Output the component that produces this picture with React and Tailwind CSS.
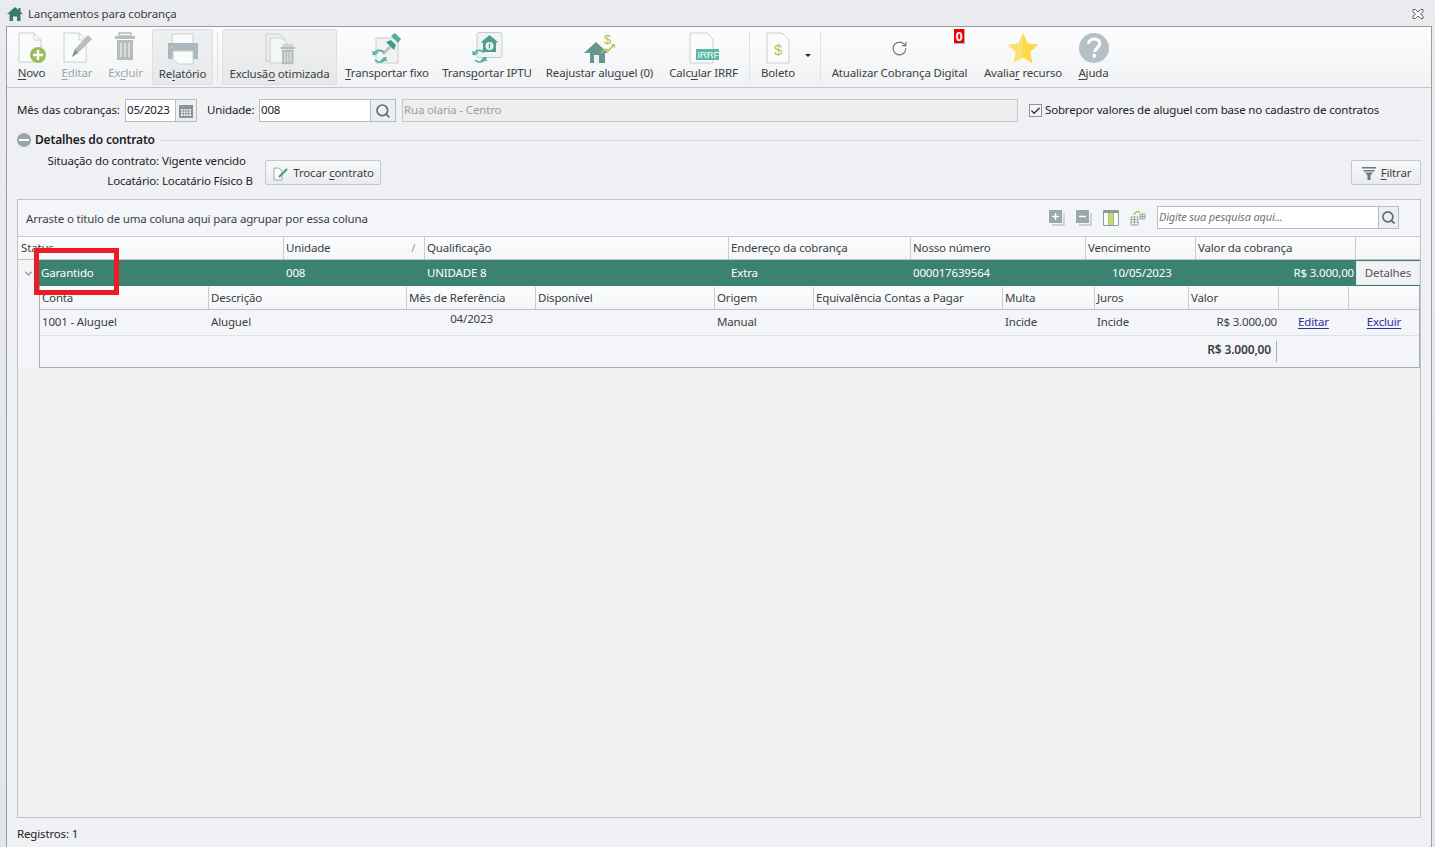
import { Search, ChevronDown, RotateCcw, Check } from "lucide-react";

function Doc() {
  return (
    <path
      d="M3 1h15l7 7v22H3z M18 1v7h7"
      fill="#fafbfb"
      stroke="#c9d0d3"
      strokeWidth="1"
    />
  );
}

function IconNovo() {
  return (
    <svg width="32" height="32" viewBox="0 0 32 32">
      <Doc />
      <circle cx="22" cy="23" r="8" fill="#9dbb5c" />
      <path d="M22 18v10M17 23h10" stroke="#fff" strokeWidth="2.4" />
    </svg>
  );
}

function IconEditar() {
  return (
    <svg width="32" height="32" viewBox="0 0 32 32">
      <Doc />
      <path d="M11 25l3-8L27 3l4 4-14 14z" fill="#b9bdbe" />
      <path d="M11 25l3-8 3 4z" fill="#8e9294" />
    </svg>
  );
}

function Trash({ x = 0, y = 0, s = 1 }) {
  return (
    <g transform={`translate(${x} ${y}) scale(${s})`} fill="#b8bcbd">
      <path d="M9 1h12v3H9z" fill="none" stroke="#b8bcbd" strokeWidth="1.4" />
      <rect x="5" y="4" width="20" height="3" />
      <path d="M7 8h16v20H7z" />
      <path d="M11 11v14M15 11v14M19 11v14" stroke="#e9ebeb" strokeWidth="1.4" />
    </g>
  );
}

function IconExcluir() {
  return (
    <svg width="32" height="32" viewBox="0 0 32 32">
      <Trash />
    </svg>
  );
}

function IconPrinter() {
  return (
    <svg width="32" height="32" viewBox="0 0 32 32">
      <path d="M5 1h21v10H5z" fill="#fafbfb" stroke="#c9d0d3" />
      <path d="M1 10h30v16H1z" fill="#abb9bf" />
      <path d="M6 18h20v13H11l-5-5z" fill="#fafbfb" stroke="#c9d0d3" />
      <circle cx="5" cy="14" r="1" fill="#cfd86a" />
    </svg>
  );
}

function IconExclusao() {
  return (
    <svg width="32" height="32" viewBox="0 0 32 32">
      <path d="M2 1h14l5 5v22H2z" fill="none" stroke="#c9d0d3" />
      <path d="M6 5h12l5 5v20H6z" fill="#f4f5f5" stroke="#c9d0d3" />
      <Trash x={13} y={11} s={0.72} />
    </svg>
  );
}

function Sync({ x = 0, y = 0 }) {
  return (
    <g transform={`translate(${x} ${y})`} fill="none" stroke="#4fae9d" strokeWidth="1.6">
      <path d="M2 7a6.5 6.5 0 0 1 11-2.5" />
      <path d="M15 9a6.5 6.5 0 0 1-11 3" />
      <path d="M1 3.5l3 3 3-2.5" strokeWidth="1.3" />
      <path d="M10 13l3-3 3 3" strokeWidth="1.3" />
    </g>
  );
}

function IconFixo() {
  return (
    <svg width="32" height="32" viewBox="0 0 32 32">
      <path d="M5 6h22v25H5z" fill="#f1f3f3" stroke="#c4cdd0" />
      <path d="M12 22l9-9" stroke="#bfc3c4" strokeWidth="3" />
      <path d="M15 10l8 8 2-5-5-5z" fill="#3f9c8b" />
      <path d="M20 4l4-3 6 6-3 4z" fill="#4fae9d" />
      <Sync x={0} y={16} />
    </svg>
  );
}

function IconIptu() {
  return (
    <svg width="32" height="32" viewBox="0 0 32 32">
      <rect x="6" y="0.5" width="25" height="25" rx="2" fill="#f1f3f3" stroke="#c4cdd0" />
      <path d="M18.5 3l9 7.5h-2.5V20H12v-9.5H9.5z" fill="#4f9d8d" />
      <circle cx="18.5" cy="14" r="4" fill="#f1f3f3" />
      <path d="M18.5 11.5v5" stroke="#4f9d8d" strokeWidth="1.4" />
      <Sync x={0} y={16} />
    </svg>
  );
}

function IconReajuste() {
  return (
    <svg width="32" height="32" viewBox="0 0 32 32">
      <path d="M12 10l12 11h-3v10H6V21H0z" fill="#6a958c" />
      <rect x="10" y="23" width="5" height="8" fill="#eef1f1" />
      <path d="M17 21l5-4 2 2 6-6" fill="none" stroke="#b4c544" strokeWidth="1.6" />
      <path d="M27 12h4v4z" fill="#b4c544" />
      <text x="20" y="12" fontSize="13" fill="#b4c544" fontFamily="Liberation Sans, sans-serif">$</text>
    </svg>
  );
}

function IconIrrf() {
  return (
    <svg width="36" height="32" viewBox="0 0 36 32">
      <path d="M4 1h17l6 6v24H4z" fill="#fafbfb" stroke="#c9d0d3" />
      <rect x="10" y="17" width="23" height="11" fill="#5ab8a6" />
      <text x="11.5" y="26" fontSize="9.5" fill="#fff" fontFamily="Liberation Sans Narrow, Liberation Sans, sans-serif">IRRF</text>
    </svg>
  );
}

function IconBoleto() {
  return (
    <svg width="26" height="32" viewBox="0 0 26 32">
      <path d="M2 1h15l7 7v23H2z" fill="#fafbfb" stroke="#c9d0d3" />
      <text x="9" y="23" fontSize="15" fill="#b4c544" fontFamily="Liberation Sans, sans-serif">$</text>
    </svg>
  );
}

function IconStar() {
  return (
    <svg width="32" height="32" viewBox="0 0 32 32">
      <path d="M16 1l4.6 10.4L31 12.7l-7.8 7.2L25.4 31 16 25.4 6.6 31l2.2-11.1L1 12.7l10.4-1.3z" fill="#fde06a" />
      <path d="M16 1l4.6 10.4L31 12.7l-7.8 7.2L25.4 31 16 25.4z" fill="#fdd84c" />
    </svg>
  );
}

function IconHelp() {
  return (
    <svg width="32" height="32" viewBox="0 0 32 32">
      <circle cx="16" cy="16" r="15" fill="#b4c0c5" />
      <path d="M10.5 12c0-3 2.4-5 5.6-5s5.6 1.9 5.6 4.8c0 4-5 4.2-5 8.2" fill="none" stroke="#fff" strokeWidth="3.2" />
      <rect x="14.7" y="22" width="3.2" height="3.6" fill="#fff" />
    </svg>
  );
}

function ToolLabel({ text, u, muted }) {
  const i = text.indexOf(u);
  return (
    <span className={`whitespace-nowrap ${muted ? "text-[#a0a5a8]" : "text-[#3b3f42]"}`}>
      {text.slice(0, i)}
      <span className="underline underline-offset-2">{u}</span>
      {text.slice(i + u.length)}
    </span>
  );
}

function ToolButton({ icon, text, u, muted, boxed, className = "" }) {
  return (
    <div
      className={`flex flex-col items-center justify-between h-[56px] pb-[5px] pt-[3px] ${
        boxed
          ? "border border-[#dcdfe1] rounded-[2px] bg-gradient-to-b from-[#eef0f1] to-[#e6e8e9] px-[6px]"
          : ""
      } ${className}`}
    >
      <div className="h-[32px] flex items-center justify-center">{icon}</div>
      {u ? <ToolLabel text={text} u={u} muted={muted} /> : <span className="whitespace-nowrap text-[#3b3f42]">{text}</span>}
    </div>
  );
}

function Divider({ className = "" }) {
  return <div className={`w-px h-[50px] bg-[#dfe2e4] ${className}`} />;
}

function Toolbar() {
  return (
    <div className="h-[61px] flex items-center pl-[10px] bg-gradient-to-b from-[#fdfdfe] to-[#f0f2f4] border-b border-[#c3c7ca]">
      <ToolButton icon={<IconNovo />} text="Novo" u="N" className="w-[29px]" />
      <ToolButton icon={<IconEditar />} text="Editar" u="E" muted className="w-[30px] ml-[16px]" />
      <ToolButton icon={<IconExcluir />} text="Excluir" u="c" muted className="w-[35px] ml-[16px]" />
      <ToolButton icon={<IconPrinter />} text="Relatório" u="l" boxed className="w-[61px] ml-[9px]" />
      <Divider className="ml-[4px]" />
      <ToolButton icon={<IconExclusao />} text="Exclusão otimizada" u="o" boxed className="w-[115px] ml-[4px]" />
      <ToolButton icon={<IconFixo />} text="Transportar fixo" u="T" className="w-[82px] ml-[9px]" />
      <ToolButton icon={<IconIptu />} text="Transportar IPTU" u="p" className="w-[86px] ml-[16px]" />
      <ToolButton icon={<IconReajuste />} text="Reajustar aluguel (0)" u="g" className="w-[107px] ml-[16px]" />
      <ToolButton icon={<IconIrrf />} text="Calcular IRRF" u="u" className="w-[69px] ml-[16px]" />
      <Divider className="ml-[11px]" />
      <ToolButton icon={<IconBoleto />} text="Boleto" className="w-[34px] ml-[11px]" />
      <div className="w-0 h-0 ml-[10px] mt-[-3px] border-x-[3px] border-x-transparent border-t-[3px] border-t-[#222]" />
      <Divider className="ml-[9px]" />
      <div className="relative ml-[10px] mt-[3px]">
        <ToolButton
          icon={<RotateCcw size={17} strokeWidth={1.6} color="#777" className="-scale-x-100" />}
          text="Atualizar Cobrança Digital"
          className="w-[137px]"
        />
        <span className="absolute left-[123px] -top-[2px] w-[11px] h-[15px] bg-[#ee0000] border-b border-r border-[#b0b4b6] text-white text-[12px] leading-[15px] font-bold text-center">
          0
        </span>
      </div>
      <ToolButton icon={<IconStar />} text="Avaliar recurso" u="r" className="w-[78px] ml-[16px]" />
      <ToolButton icon={<IconHelp />} text="Ajuda" u="A" className="w-[31px] ml-[16px]" />
    </div>
  );
}

function Filters() {
  return (
    <div className="flex items-center h-[23px] mt-[11px] ml-[10px]">
      <span className="whitespace-nowrap w-[108px] text-[#222] -mt-[2px]">Mês das cobranças:</span>
      <div className="h-[23px] w-[72px] flex border border-[#b6bcbf] bg-white">
        <span className="w-[50px] pl-[1px] leading-[20px] text-[#222] border-r border-[#b6bcbf]">05/2023</span>
        <div className="flex-1 bg-[#eceef0] flex items-center justify-center">
          <svg width="16" height="16" viewBox="0 0 16 16">
            <rect x="1" y="2" width="14" height="13" fill="#8d9498" />
            <path d="M3 6h10v7H3z" fill="#e9ebec" />
            <path d="M3 8h10M3 10.5h10M5.5 6v7M8 6v7M10.5 6v7" stroke="#8d9498" strokeWidth="0.8" />
          </svg>
        </div>
      </div>
      <span className="ml-[10px] w-[52px] whitespace-nowrap text-[#222] -mt-[2px]">Unidade:</span>
      <div className="h-[23px] w-[137px] flex border border-[#b6bcbf] bg-white">
        <span className="flex-1 pl-[1px] leading-[20px] text-[#222] border-r border-[#b6bcbf]">008</span>
        <div className="w-[24px] bg-[#eceef0] flex items-center justify-center">
          <Search size={16} strokeWidth={2.5} color="#5f6b70" />
        </div>
      </div>
      <div className="h-[23px] w-[616px] ml-[6px] pl-[1px] leading-[20px] border border-[#c4c8ca] bg-[#eeeeee] text-[#9a9ea1]">
        Rua olaria - Centro
      </div>
      <div className="w-[13px] h-[13px] ml-[11px] border border-[#8d9498] bg-[#f4f5f6] flex items-center justify-center">
        <Check size={12} strokeWidth={3} color="#333" />
      </div>
      <span className="ml-[3px] whitespace-nowrap text-[#222] -mt-[2px]">Sobrepor valores de aluguel com base no cadastro de contratos</span>
    </div>
  );
}

function Details() {
  return (
    <div className="ml-[10px] mr-[10px]">
      <div className="flex items-center h-[18px] mt-[9px]">
        <div className="w-[14px] h-[14px] rounded-full bg-[#98a6ac] flex items-center justify-center">
          <div className="w-[10px] h-[2px] bg-white" />
        </div>
        <span className="ml-[4px] text-[12px] font-semibold text-[#222] whitespace-nowrap">Detalhes do contrato</span>
        <div className="flex-1 h-px bg-[#d5d8da] ml-[6px]" />
      </div>
      <div className="flex items-start mt-[2px]">
        <div className="w-[237px] flex flex-col text-[#222]">
          <div className="h-[20px] leading-[20px] flex">
            <span className="w-[142px] text-right">Situação do contrato:</span>
            <span className="ml-[3px] whitespace-nowrap">Vigente vencido</span>
          </div>
          <div className="h-[20px] leading-[20px] flex">
            <span className="w-[142px] text-right">Locatário:</span>
            <span className="ml-[3px] whitespace-nowrap">Locatário Físico B</span>
          </div>
        </div>
        <button className="ml-[11px] mt-[9px] h-[25px] w-[116px] flex items-center justify-center border border-[#c3c8cb] rounded-[2px] bg-gradient-to-b from-[#f8f9fa] to-[#e9ebed] text-[#3b3f42]">
          <svg width="18" height="16" viewBox="0 0 18 16" className="mr-[3px]">
            <path d="M2 3h5l3 3v9H2z" fill="#fafbfb" stroke="#8d9498" strokeWidth="0.8" />
            <path d="M7 12l8-8" stroke="#2f9c7f" strokeWidth="1.8" />
          </svg>
          <span>
            Trocar <span className="underline underline-offset-2">c</span>ontrato
          </span>
        </button>
        <button className="ml-auto mt-[9px] h-[25px] w-[70px] flex items-center justify-center border border-[#c3c8cb] rounded-[2px] bg-gradient-to-b from-[#f8f9fa] to-[#e9ebed] text-[#3b3f42]">
          <svg width="16" height="14" viewBox="0 0 16 14" className="mr-[4px]">
            <path d="M1 1h14v1.5H1zM2.5 4h11v1.5h-11zM4 6.5h8L9.5 9.5V14h-3V9.5z" fill="#6d7a7f" />
          </svg>
          <span>
            <span className="underline underline-offset-2">F</span>iltrar
          </span>
        </button>
      </div>
    </div>
  );
}

const mainCols = [
  { title: "Status", w: "w-[265px]" },
  { title: "Unidade", w: "w-[141px]" },
  { title: "Qualificação", w: "w-[304px]" },
  { title: "Endereço da cobrança", w: "w-[182px]" },
  { title: "Nosso número", w: "w-[175px]" },
  { title: "Vencimento", w: "w-[110px]" },
  { title: "Valor da cobrança", w: "w-[160px]" },
  { title: "", w: "flex-1" },
];

const subCols = [
  { title: "Conta", w: "w-[169px]" },
  { title: "Descrição", w: "w-[198px]" },
  { title: "Mês de Referência", w: "w-[129px]" },
  { title: "Disponível", w: "w-[179px]" },
  { title: "Origem", w: "w-[99px]" },
  { title: "Equivalência Contas a Pagar", w: "w-[189px]" },
  { title: "Multa", w: "w-[92px]" },
  { title: "Juros", w: "w-[94px]" },
  { title: "Valor", w: "w-[90px]" },
  { title: "", w: "w-[70px]" },
  { title: "", w: "flex-1" },
];

function HeadCell({ title, w, last, children }) {
  return (
    <div className={`${w} pl-[2px] leading-[22px] whitespace-nowrap text-[#3b3f42] relative ${last ? "" : "border-r border-[#c9cdd0]"}`}>
      {title}
      {children}
    </div>
  );
}

function GridTop() {
  return (
    <div className="h-[37px] flex items-center pl-[8px] pr-[21px] border-b border-[#c9cdd0]">
      <span className="text-[#3b3f42] whitespace-nowrap mt-[2px]">Arraste o titulo de uma coluna aqui para agrupar por essa coluna</span>
      <div className="ml-auto flex items-center -mt-[1px]">
        <svg width="16" height="16" viewBox="0 0 16 16">
          <path d="M3 15h12V3" fill="none" stroke="#c3c9cc" strokeWidth="1.5" />
          <rect x="0" y="0" width="13" height="13" fill="#9aa7ac" />
          <path d="M6.5 3v7M3 6.5h7" stroke="#fff" strokeWidth="1.5" />
        </svg>
        <svg width="16" height="16" viewBox="0 0 16 16" className="ml-[11px]">
          <path d="M3 15h12V3" fill="none" stroke="#c3c9cc" strokeWidth="1.5" />
          <rect x="0" y="0" width="13" height="13" fill="#9aa7ac" />
          <path d="M3 6.5h7" stroke="#fff" strokeWidth="1.5" />
        </svg>
        <svg width="16" height="16" viewBox="0 0 16 16" className="ml-[11px]">
          <rect x="0" y="0" width="16" height="16" rx="1" fill="#8f9a9e" />
          <rect x="1" y="3" width="4" height="12" fill="#fafbfb" />
          <rect x="5.5" y="3" width="5" height="12" fill="#c6d96c" />
          <rect x="11" y="3" width="4" height="12" fill="#fafbfb" />
        </svg>
        <svg width="16" height="16" viewBox="0 0 16 16" className="ml-[11px]">
          <path d="M1 7h7v8H1z" fill="#fff" stroke="#8f9a9e" strokeWidth="0.9" />
          <path d="M1 9.5h7M1 12h7M4.5 7v8M10 4h5v5h-5z M10 6.5h5M12.5 4v5" fill="none" stroke="#8f9a9e" strokeWidth="0.9" />
          <path d="M4 5c1-3 3-4 6-3" fill="none" stroke="#b4c544" strokeWidth="1.4" />
        </svg>
        <div className="ml-[11px] w-[242px] h-[23px] flex border border-[#b6bcbf] bg-white">
          <span className="flex-1 pl-[1px] italic text-[11px] leading-[20px] text-[#6f7477]">Digite sua pesquisa aqui...</span>
          <div className="w-[20px] border-l border-[#b6bcbf] bg-[#eceef0] flex items-center justify-center">
            <Search size={15} strokeWidth={2.5} color="#5f6b70" />
          </div>
        </div>
      </div>
    </div>
  );
}

function MainHeader() {
  return (
    <div className="h-[23px] flex pl-[1px] border-b border-[#bfc3c6] bg-gradient-to-b from-[#fbfcfd] to-[#f3f5f7]">
      {mainCols.map((c, i) => (
        <HeadCell key={i} title={c.title} w={c.w} last={i === mainCols.length - 1}>
          {c.title === "Unidade" && <span className="absolute right-[9px] top-0 text-[10px] text-[#8a9094]">/</span>}
        </HeadCell>
      ))}
    </div>
  );
}

function MainRow() {
  return (
    <div className="h-[26px] flex bg-[#f2f4f6]">
      <div className="w-[21px] flex items-center justify-center">
        <ChevronDown size={11} strokeWidth={2.5} color="#7d8589" />
      </div>
      <div className="flex-1 flex items-center bg-[#3c8272] text-white leading-[24px] whitespace-nowrap">
        <span className="w-[245px] pl-[2px]">Garantido</span>
        <span className="w-[141px] pl-[2px]">008</span>
        <span className="w-[304px] pl-[2px]">UNIDADE 8</span>
        <span className="w-[182px] pl-[2px]">Extra</span>
        <span className="w-[175px] pl-[2px]">000017639564</span>
        <span className="w-[110px] pl-[26px]">10/05/2023</span>
        <span className="w-[160px] text-right pr-[2px]">R$ 3.000,00</span>
        <div className="flex-1 h-[24px] flex items-center justify-center border border-[#e4e7e9] bg-[#f1f2f3] text-[#555b5f]">Detalhes</div>
      </div>
    </div>
  );
}

function SubGrid() {
  const cell = "leading-[23px] whitespace-nowrap text-[#3b3f42]";
  const link = "text-center leading-[23px] text-[#2a2ea0] underline underline-offset-2";
  return (
    <div className="flex">
      <div className="w-[21px] shrink-0" />
      <div className="flex-1 border border-t-0 border-[#a8adb0] bg-[#f3f5f8]">
        <div className="h-[23px] flex mt-[1px] border-b border-[#bfc3c6] bg-gradient-to-b from-[#fbfcfd] to-[#f3f5f7]">
          {subCols.map((c, i) => (
            <HeadCell key={i} title={c.title} w={c.w} last={i === subCols.length - 1} />
          ))}
        </div>
        <div className="h-[26px] flex border-b border-[#dfe2e4]">
          <span className={`w-[169px] pl-[2px] ${cell}`}>1001 - Aluguel</span>
          <span className={`w-[198px] pl-[2px] ${cell}`}>Aluguel</span>
          <span className="w-[129px] text-center leading-[18px] text-[#3b3f42]">04/2023</span>
          <span className={`w-[179px] ${cell}`} />
          <span className={`w-[99px] pl-[2px] ${cell}`}>Manual</span>
          <span className={`w-[189px] ${cell}`} />
          <span className={`w-[92px] pl-[2px] ${cell}`}>Incide</span>
          <span className={`w-[94px] pl-[2px] ${cell}`}>Incide</span>
          <span className={`w-[89px] pr-[1px] text-right ${cell}`}>R$ 3.000,00</span>
          <span className={`w-[71px] ${link}`}>Editar</span>
          <span className={`flex-1 ${link}`}>Excluir</span>
        </div>
        <div className="h-[31px] flex items-center">
          <div className="w-[1237px] h-[21px] leading-[18px] text-[12px] text-right pr-[5px] font-semibold text-[#3b3f42] border-r border-[#a8adb0]">
            R$ 3.000,00
          </div>
        </div>
      </div>
    </div>
  );
}

export default function App() {
  return (
    <div
      className="w-[1435px] h-[847px] overflow-hidden flex flex-col bg-gradient-to-b from-[#e9ebee] to-[#e3e6e9] text-[11.5px] tracking-[-0.16px] relative"
      style={{ fontFamily: '"Noto Sans", "Open Sans", sans-serif' }}
    >
      <div className="h-[26px] shrink-0 flex items-center pl-[7px] pr-[11px] pt-[2px]">
        <svg width="16" height="15" viewBox="0 0 16 15" className="-mt-[2px]">
          <path d="M8 1L0 8h2.5v7H6v-4.5h4V15h3.5V8H16l-2.500-2.200V2h-2v2z" fill="#3a7a6c" />
        </svg>
        <span className="ml-[5px] text-[#3b3f42]">Lançamentos para cobrança</span>
        <svg width="12" height="10" viewBox="0 0 12 10" className="ml-auto">
          <path d="M1 .5h2.5L6 3l2.500-2.500H11V3L8.500 5 11 7v2.500H8.500L6 7 3.500 9.500H1V7l2.500-2L1 3z" fill="#fff" stroke="#555" strokeWidth="0.9" />
        </svg>
      </div>
      <div className="flex-1 flex flex-col ml-[6px] mr-[3px] border-t border-x border-[#989da1] bg-[#f0f1f4] min-h-0">
        <Toolbar />
        <Filters />
        <Details />
        <div className="ml-[10px] mr-[10px] mt-[8px] h-[619px] flex flex-col border border-[#bfc3c6] bg-[#f0f0f0]">
          <div className="bg-[#f3f5f8]">
            <GridTop />
            <MainHeader />
            <MainRow />
            <SubGrid />
          </div>
        </div>
        <div className="ml-[10px] mt-[7px] text-[#222]">Registros: 1</div>
      </div>
      <div className="absolute left-[34px] top-[248px] w-[85px] h-[47px] border-[5px] border-[#ed1c24]" />
    </div>
  );
}
